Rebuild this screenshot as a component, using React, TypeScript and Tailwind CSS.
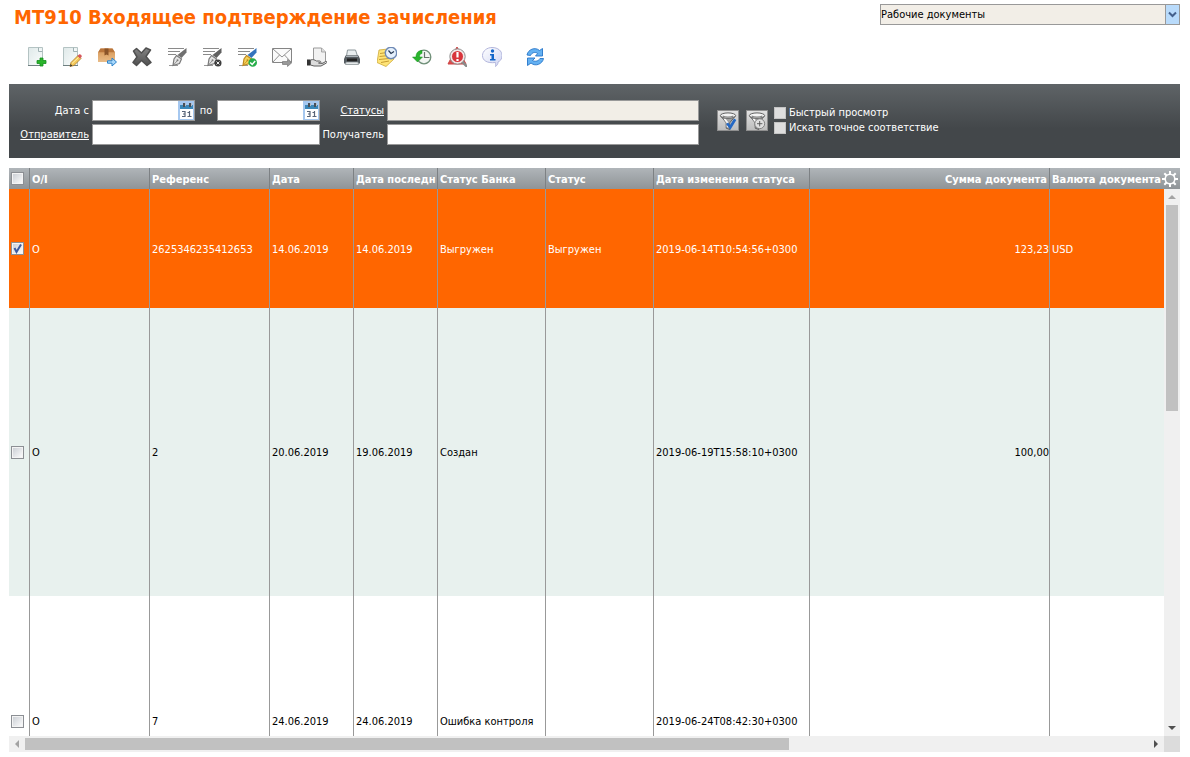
import type { ReactNode } from "react";

function Icon({ children, size = 20 }: { children: ReactNode; size?: number }) {
  return (
    <svg viewBox="0 0 20 20" width={size} height={size} className="shrink-0" aria-hidden>
      {children}
    </svg>
  );
}

function Page() {
  return (
    <>
      <path d="M1.5.5h14v18h-14z" fill="url(#page)" stroke="#b4c3c3" />
      <path d="M11.500.5v4h4" fill="#f4f8f8" stroke="#9fb0b2" />
      <path d="M1 18.500h15" stroke="#6f8081" />
    </>
  );
}

function PenText({ pen, nib, edge }: { pen: string; nib: string; edge: string }) {
  return (
    <>
      <path d="M1 1.500h16M1 4.500h12M1 7.500h8" stroke="#8a8a8a" />
      <path d="M2 18.500h9" stroke="#999" />
      <path d="M19.500 1v4.500l-5 5.500-4-3z" fill={pen} />
      <path d="M9.500 8.500l5 3.500-2 4.500-6.500 2 1-6.500z" fill={nib} stroke={edge} strokeWidth="1.200" />
      <path d="M6 18.500l4-4.500" stroke={edge} strokeWidth=".8" />
      <circle cx="10.500" cy="13.200" r="1" fill={edge} />
    </>
  );
}

const tools = [
  {
    title: "Создать",
    icon: (
      <>
        <Page />
        <path d="M13 11h3v2.500h3v3h-3V19h-3v-2.500h-3v-3h3z" fill="#2bb52b" stroke="#158f1e" strokeWidth=".8" />
      </>
    ),
  },
  {
    title: "Изменить",
    icon: (
      <>
        <Page />
        <path d="M8 19.500l1-4 7-7 3 3-7 7z" fill="#f5c95a" stroke="#a97726" strokeWidth=".8" />
        <path d="M15.500 9l1.500-1.500c1-1 3.500 1 2.500 2.500L18 11.500z" fill="#d5565b" />
        <path d="M10 16.500l6.500-6" stroke="#fff0a8" />
        <path d="M8 19.500l.600-2.500 1.800 1.800z" fill="#333" />
      </>
    ),
  },
  {
    title: "В архив",
    icon: (
      <>
        <path d="M3.500 1.500h12l2.500 4v9H1v-9z" fill="#d9a066" />
        <path d="M3.500 1.500h12l2.500 4H1z" fill="#b9753b" />
        <path d="M1 5.500h17v9.500H1z" fill="url(#box)" />
        <path d="M7.500 1.500h4v7l-2-1-2 1z" fill="#8a5429" />
        <path d="M10.500 13.800h4.500V11l4.500 4-4.500 4v-2.800h-4.500z" fill="#a9d8fb" stroke="#2b82c9" />
      </>
    ),
  },
  {
    title: "Удалить",
    icon: (
      <path
        d="M4.500 1.500l5 4.500L14 1l4.500 2-4.500 6.500 5 6-4 3-5.500-5-5 5L1 15.500 5 10 1.500 4z"
        fill="url(#dark)"
        stroke="#505050"
        strokeWidth="1.500"
        strokeLinejoin="round"
      />
    ),
  },
  { title: "Подписать", icon: <PenText pen="#707070" nib="#e4e4e4" edge="#7a7a7a" /> },
  {
    title: "Снять подпись",
    icon: (
      <>
        <PenText pen="#606060" nib="#e4e4e4" edge="#7a7a7a" />
        <circle cx="16" cy="16" r="3.500" fill="#3d3d3d" />
        <path d="M14.500 14.500l3 3M17.500 14.500l-3 3" stroke="#eee" />
      </>
    ),
  },
  {
    title: "Проверить подпись",
    icon: (
      <>
        <PenText pen="#3474bd" nib="#f6d258" edge="#c08a20" />
        <circle cx="15.700" cy="15.500" r="4.300" fill="#27ad49" />
        <path d="M13.200 15.500l2 2 3-3.500" fill="none" stroke="#fff" strokeWidth="1.500" />
      </>
    ),
  },
  {
    title: "Отправить",
    icon: (
      <>
        <path d="M.5 1.500h19v14H.5z" fill="#fafafa" stroke="#858585" />
        <path d="M1 2l9 8 9-8M1 15l6.500-7M19 15l-6.500-7" fill="none" stroke="#929292" />
        <path d="M10.500 14.500h5v-2l4 3.500-4 3.500v-2h-5z" fill="#999" stroke="#6b6b6b" strokeWidth=".6" />
      </>
    ),
  },
  {
    title: "Выгрузить",
    icon: (
      <>
        <path d="M6.500 1h8l4 4v11h-12z" fill="#f2f2f2" stroke="#9a9a9a" />
        <path d="M14.500 1v4h4" fill="#ddd" stroke="#999" strokeWidth=".8" />
        <path d="M0 12.500h3.500v6H0z" fill="#333" />
        <path
          d="M3.500 13c3-1 4 0 6 1h3c2 0 1 2-1 2l4 .5 3-2c1.500-.5 2 .8 1 1.500L14 19H7l-3.500-1z"
          fill="#ddd"
          stroke="#5f5f5f"
        />
      </>
    ),
  },
  {
    title: "Печать",
    icon: (
      <>
        <path d="M5.500 3h8l2 6h-11z" fill="#e9eef0" stroke="#8c979b" />
        <path d="M3.500 8.500h13l1.500 3.500v4.500H2V12z" fill="#565d62" />
        <path d="M4 9.500h12" stroke="#a9b1b6" />
        <path d="M5 11.500h10v3H5z" fill="#222" />
        <path d="M4 15h12l.5 2.500h-13z" fill="#e5e9ea" stroke="#7d8588" strokeWidth=".7" />
      </>
    ),
  },
  {
    title: "Отложить",
    icon: (
      <>
        <path d="M2 3l9-1 6 10-8 7.500L0 15.500z" fill="#ffe477" stroke="#cda93a" strokeWidth=".8" />
        <path d="M3 6.500l7-1M2.500 9.500l9-1M2 12.500l10-1M4 15.500l8-1.500" stroke="#b88a20" strokeWidth=".8" />
        <circle cx="14" cy="6" r="5.700" fill="#e5f0fc" stroke="#6e89b5" strokeWidth="1.400" />
        <path d="M11.500 3.500L14 6.500l3-2" fill="none" stroke="#253852" strokeWidth="1.200" />
      </>
    ),
  },
  {
    title: "История",
    icon: (
      <>
        <circle cx="12" cy="10" r="6.800" fill="#f3f6f3" stroke="#6f8f78" strokeWidth="1.300" />
        <path d="M12.500 5v5.500h5" fill="none" stroke="#67736a" strokeWidth="1.200" />
        <path d="M10 3.500C6 3.500 4 6 4 10H.500L5.500 15l5-5H7.500c0-2 .8-3.500 2.500-3.500z" fill="#2ab52d" stroke="#158f1e" strokeWidth=".5" />
      </>
    ),
  },
  {
    title: "Показать ошибки",
    icon: (
      <>
        <path d="M10 0l9 17H1z" fill="#dd4b4b" stroke="#c44" strokeLinejoin="round" />
        <path d="M15.500 15l4 4" stroke="#8b8b8b" strokeWidth="2.500" strokeLinecap="round" />
        <circle cx="10.500" cy="9.500" r="6.500" fill="#d8343b" stroke="#f3e5e5" strokeWidth="2" />
        <circle cx="10.500" cy="9.500" r="7.700" fill="none" stroke="#8d8d8d" />
        <path d="M10.500 5v5.500M10.500 12v2" stroke="#fff" strokeWidth="2.200" />
      </>
    ),
  },
  {
    title: "Информация",
    icon: (
      <>
        <path
          d="M10 .5c6 0 10 3.500 10 8 0 4-2 5.500-4 6.500 0 2-.5 3-2.500 4.500.5-2 0-3 0-4C5 16.500.5 13.500.5 8.500.5 4 5 .5 10 .5z"
          fill="url(#bubble)"
          stroke="#b3b6dc"
        />
        <circle cx="10.500" cy="4" r="1.700" fill="#1266c9" />
        <path d="M8 7h4v5h1.500v1.500H8V12h1.500V8.500H8z" fill="#1266c9" />
      </>
    ),
  },
  {
    title: "Обновить",
    icon: (
      <g fill="#64b1f2" stroke="#2675c8" strokeWidth=".9" strokeLinejoin="round">
        <path d="M2 8C3 2.500 10-.5 14.500 3.500L17.500 1.500v7.500H10.500l2.200-2.500C10 4.500 7 5.500 5.500 8.500z" />
        <path d="M18.500 11.500c-1 5.500-8 8.500-12.500 4.500L2.500 18.500V11h7.500l-2.500 2.500c3 1.500 6 .5 7.500-2z" />
      </g>
    ),
  },
];

const columns = [
  { title: "O/I", width: "w-[120px]" },
  { title: "Референс", width: "w-[120px]" },
  { title: "Дата", width: "w-[84px]" },
  { title: "Дата последн", width: "w-[84px]" },
  { title: "Статус Банка", width: "w-[108px]" },
  { title: "Статус", width: "w-[108px]" },
  { title: "Дата изменения статуса", width: "w-[156px]" },
  { title: "Сумма документа", width: "w-[240px]", right: true },
  { title: "Валюта документа", width: "" },
];

const rows = [
  {
    style: "h-[119px] bg-[#ff6600] text-white",
    checked: true,
    cells: ["O", "2625346235412653", "14.06.2019", "14.06.2019", "Выгружен", "Выгружен", "2019-06-14T10:54:56+0300", "123,23", "USD"],
  },
  {
    style: "h-[288px] bg-[#e8f1ee]",
    checked: false,
    cells: ["O", "2", "20.06.2019", "19.06.2019", "Создан", "", "2019-06-19T15:58:10+0300", "100,00", ""],
  },
  {
    style: "h-[250px] bg-white",
    checked: false,
    cells: ["O", "7", "24.06.2019", "24.06.2019", "Ошибка контроля", "", "2019-06-24T08:42:30+0300", "", ""],
  },
];

function Gradients() {
  return (
    <svg width="0" height="0" className="absolute" aria-hidden>
      <defs>
        <linearGradient id="page" x1="0" y1="0" x2="1" y2="1">
          <stop offset="0" stopColor="#dfe9e9" />
          <stop offset="1" stopColor="#fbfdfd" />
        </linearGradient>
        <linearGradient id="box" x1="0" y1="0" x2="0" y2="1">
          <stop offset="0" stopColor="#dba062" />
          <stop offset="1" stopColor="#e9bc88" />
        </linearGradient>
        <linearGradient id="dark" x1="0" y1="0" x2="0" y2="1">
          <stop offset="0" stopColor="#858585" />
          <stop offset="1" stopColor="#505050" />
        </linearGradient>
        <linearGradient id="bubble" x1="0" y1="0" x2="1" y2="1">
          <stop offset="0" stopColor="#ffffff" />
          <stop offset="1" stopColor="#cfd5f3" />
        </linearGradient>
      </defs>
    </svg>
  );
}

function RowCheckbox({ label, checked = false }: { label: string; checked?: boolean }) {
  return (
    <label className="relative ml-[2px] block size-[13px]">
      <input
        type="checkbox"
        aria-label={label}
        defaultChecked={checked}
        className="peer block size-[13px] appearance-none border border-[#8c8f94] bg-linear-to-br from-[#c8ccd2] to-white shadow-[inset_0_0_0_1px_#f4f4f4]"
      />
      <svg viewBox="0 0 13 13" className="pointer-events-none absolute inset-0 hidden size-[13px] peer-checked:block" aria-hidden>
        <path d="M3.500 6l2 4 4.500-7.500" fill="none" stroke="#3c5aa0" strokeWidth="2" />
      </svg>
    </label>
  );
}

function DateField({ label }: { label: string }) {
  return (
    <div className="flex h-[21px] w-[103px] border border-[#999] bg-white">
      <input type="text" aria-label={label} className="min-w-0 flex-1 px-[2px] outline-none" />
      <button type="button" aria-label="Календарь" className="w-4 shrink-0 bg-[#a6c8f0]">
        <svg viewBox="0 0 16 19" width="16" height="19" aria-hidden>
          <path d="M2 4h13v4H2z" fill="#3c87b8" />
          <path d="M2 8h13v10H2z" fill="#fff" />
          <path d="M5 2h2v4H5zM11 2h2v4h-2z" fill="#4a5058" />
          <path d="M7 2h1v3H7zM13 2h1v3h-1z" fill="#b5bdc8" />
          <path d="M4 10.500h3v5H4M5 13h2M11.500 10v5M9.500 11.500h2M9.500 15.500h4" fill="none" stroke="#586478" strokeWidth="1.200" />
        </svg>
      </button>
    </div>
  );
}

function FilterButton({ label, children }: { label: string; children: ReactNode }) {
  return (
    <button
      type="button"
      aria-label={label}
      className="flex h-[21px] w-[22px] items-center justify-center border border-[#8f8f8f] bg-linear-to-b from-[#e2e2e2] to-[#bdbdbd]"
    >
      <Icon size={18}>
        <path d="M2 4.500L8 12v6l4 1.500V12l6-7.500z" fill="#a3a3a3" stroke="#555" />
        <path d="M6 7.500l3.500 4.500v5" fill="none" stroke="#fafafa" strokeWidth="2" />
        <ellipse cx="10" cy="4" rx="8.500" ry="3" fill="#f4f4f4" stroke="#555" />
        <path d="M4 4.500c3 1.500 9 1.500 12 0" fill="none" stroke="#888" strokeWidth="1.500" />
        {children}
      </Icon>
    </button>
  );
}

function FilterCheckbox({ id, label }: { id: string; label: string }) {
  return (
    <div className="flex h-[15px] items-center gap-[3px]">
      <input id={id} type="checkbox" className="size-3 appearance-none border border-[#c4c4c4] bg-[#dedede] checked:bg-[#3c5aa0]" />
      <label htmlFor={id}>{label}</label>
    </div>
  );
}

function Filters() {
  const field = "h-[21px] w-full border border-[#999] px-[2px] text-black outline-none";
  return (
    <form className="mt-[10px] flex h-[74px] shrink-0 items-start bg-linear-to-b from-[#5f6467] to-[#43474a] to-60% pt-4 whitespace-nowrap text-white">
      <div className="grid grid-cols-[80px_228px_61px_312px] items-center gap-[3px]">
        <span className="text-right">Дата с</span>
        <div className="flex items-center justify-between text-black">
          <DateField label="Дата с" />
          <span className="text-white">по</span>
          <DateField label="Дата по" />
        </div>
        <a href="#statuses" className="text-right underline">Статусы</a>
        <input type="text" aria-label="Статусы" readOnly className={`${field} bg-[#f2eee7]`} />
        <a href="#sender" className="flex justify-end underline">Отправитель</a>
        <input type="text" aria-label="Отправитель" className={`${field} bg-white`} />
        <label htmlFor="receiver" className="flex justify-end">Получатель</label>
        <input id="receiver" type="text" className={`${field} bg-white`} />
      </div>
      <div className="mt-[10px] ml-[18px] flex gap-[7px]">
        <FilterButton label="Применить фильтр">
          <path d="M9 12.500l3.500 4.500L18 8" fill="none" stroke="#2468c4" strokeWidth="3" />
        </FilterButton>
        <FilterButton label="Добавить фильтр">
          <circle cx="13" cy="13" r="5.500" fill="#e0e0e0" stroke="#777" />
          <path d="M13 10v6M10 13h6" stroke="#555" />
        </FilterButton>
      </div>
      <div className="mt-[5px] ml-[6px]">
        <FilterCheckbox id="preview" label="Быстрый просмотр" />
        <FilterCheckbox id="exact" label="Искать точное соответствие" />
      </div>
    </form>
  );
}

function Documents() {
  return (
    <table className="w-full min-w-[1155px] table-fixed border-separate border-spacing-0">
      <thead>
        <tr className="h-[21px] bg-linear-to-b from-[#b0b5b9] to-[#8f9497] text-white">
          <th className="w-[21px] border-r border-[#7d8184] p-0">
            <RowCheckbox label="Выбрать все" />
          </th>
          {columns.map((col) => (
            <th
              key={col.title}
              className={`border-[#7d8184] px-[2px] pt-[2px] pb-0 whitespace-nowrap not-last:border-r ${col.width} ${col.right ? "text-right" : "text-left"}`}
            >
              {col.title}
            </th>
          ))}
        </tr>
      </thead>
      <tbody>
        {rows.map((row) => (
          <tr key={row.cells[1]} className={row.style}>
            <td className="border-r border-[#999] p-0">
              <RowCheckbox label={`Выбрать ${row.cells[1]}`} checked={row.checked} />
            </td>
            {row.cells.map((cell, i) => (
              <td
                key={columns[i].title}
                className={`overflow-hidden border-[#999] pt-[2px] pb-0 whitespace-nowrap not-last:border-r ${columns[i].right ? "text-right" : "px-[2px]"}`}
              >
                {cell}
              </td>
            ))}
          </tr>
        ))}
      </tbody>
    </table>
  );
}

function Arrow({ d, color }: { d: string; color: string }) {
  return (
    <svg viewBox="0 0 16 16" width="16" height="16" className="shrink-0" aria-hidden>
      <path d={d} fill={color} />
    </svg>
  );
}

export default function App() {
  return (
    <main className="flex h-screen flex-col bg-white pr-[10px] pb-[5px] pl-[9px] font-['DejaVu_Sans_Condensed','Noto_Sans',sans-serif] text-[11px] leading-[14px] text-black">
      <Gradients />
      <header className="flex h-9 shrink-0 items-start justify-between pt-1 pl-[5px]">
        <h1 className="text-[20px] leading-[26px] font-bold whitespace-nowrap text-[#ff6600]">
          MT910 Входящее подтверждение зачисления
        </h1>
        <div className="relative w-[300px]">
          <select
            aria-label="Папка"
            className="block h-[21px] w-full appearance-none border border-[#999] bg-[#f2eee7] pr-4 pl-0 outline-none"
          >
            <option>Рабочие документы</option>
          </select>
          <span className="pointer-events-none absolute inset-y-px right-px flex w-[14px] items-center justify-center border-l border-[#999] bg-[#b9dbfb]">
            <svg viewBox="0 0 9 7" width="9" height="7" aria-hidden>
              <path d="M1 1.500l3.500 3.500L8 1.500" fill="none" stroke="#44608c" strokeWidth="2" />
            </svg>
          </span>
        </div>
      </header>
      <nav className="flex h-[38px] shrink-0 items-center pt-1 pl-[10px]">
        {tools.map((tool) => (
          <button
            key={tool.title}
            type="button"
            aria-label={tool.title}
            className="flex w-[35px] justify-center last:ml-2"
          >
            <Icon>{tool.icon}</Icon>
          </button>
        ))}
      </nav>
      <Filters />
      <section className="mt-[10px] flex min-h-0 flex-1">
        <div className="flex min-w-0 flex-1 flex-col">
          <div className="min-h-0 flex-1 overflow-hidden">
            <Documents />
          </div>
          <div className="flex h-4 shrink-0 items-center bg-[#f0f0f0]">
            <Arrow d="M10 4v8L6 8z" color="#a3a3a3" />
            <div className="h-3 flex-1">
              <div className="h-3 w-[68%] bg-[#c1c1c1]" />
            </div>
            <Arrow d="M6 4v8l4-4z" color="#505050" />
          </div>
        </div>
        <div className="flex w-4 shrink-0 flex-col items-center bg-[#f0f0f0]">
          <button
            type="button"
            aria-label="Настройка колонок"
            className="flex h-[21px] w-4 shrink-0 items-center justify-end bg-linear-to-b from-[#b0b5b9] to-[#8f9497] pr-[2px]"
          >
            <svg viewBox="0 0 16 16" width="16" height="16" className="shrink-0" aria-hidden>
              <circle cx="8" cy="8" r="4.800" fill="none" stroke="#fff" strokeWidth="1.600" />
              <path
                d="M8 0v3M8 13v3M0 8h3M13 8h3M2.300 2.300l2.200 2.200M11.500 11.500l2.200 2.200M13.700 2.300l-2.200 2.200M4.500 11.500l-2.200 2.200"
                stroke="#fff"
                strokeWidth="2"
              />
            </svg>
          </button>
          <Arrow d="M4 10h8L8 6z" color="#a3a3a3" />
          <div className="w-3 flex-1">
            <div className="h-[40%] w-3 bg-[#c1c1c1]" />
          </div>
          <Arrow d="M4 6h8l-4 4z" color="#505050" />
          <div className="h-4 w-4 shrink-0 bg-[#dcdcdc]" />
        </div>
      </section>
    </main>
  );
}
